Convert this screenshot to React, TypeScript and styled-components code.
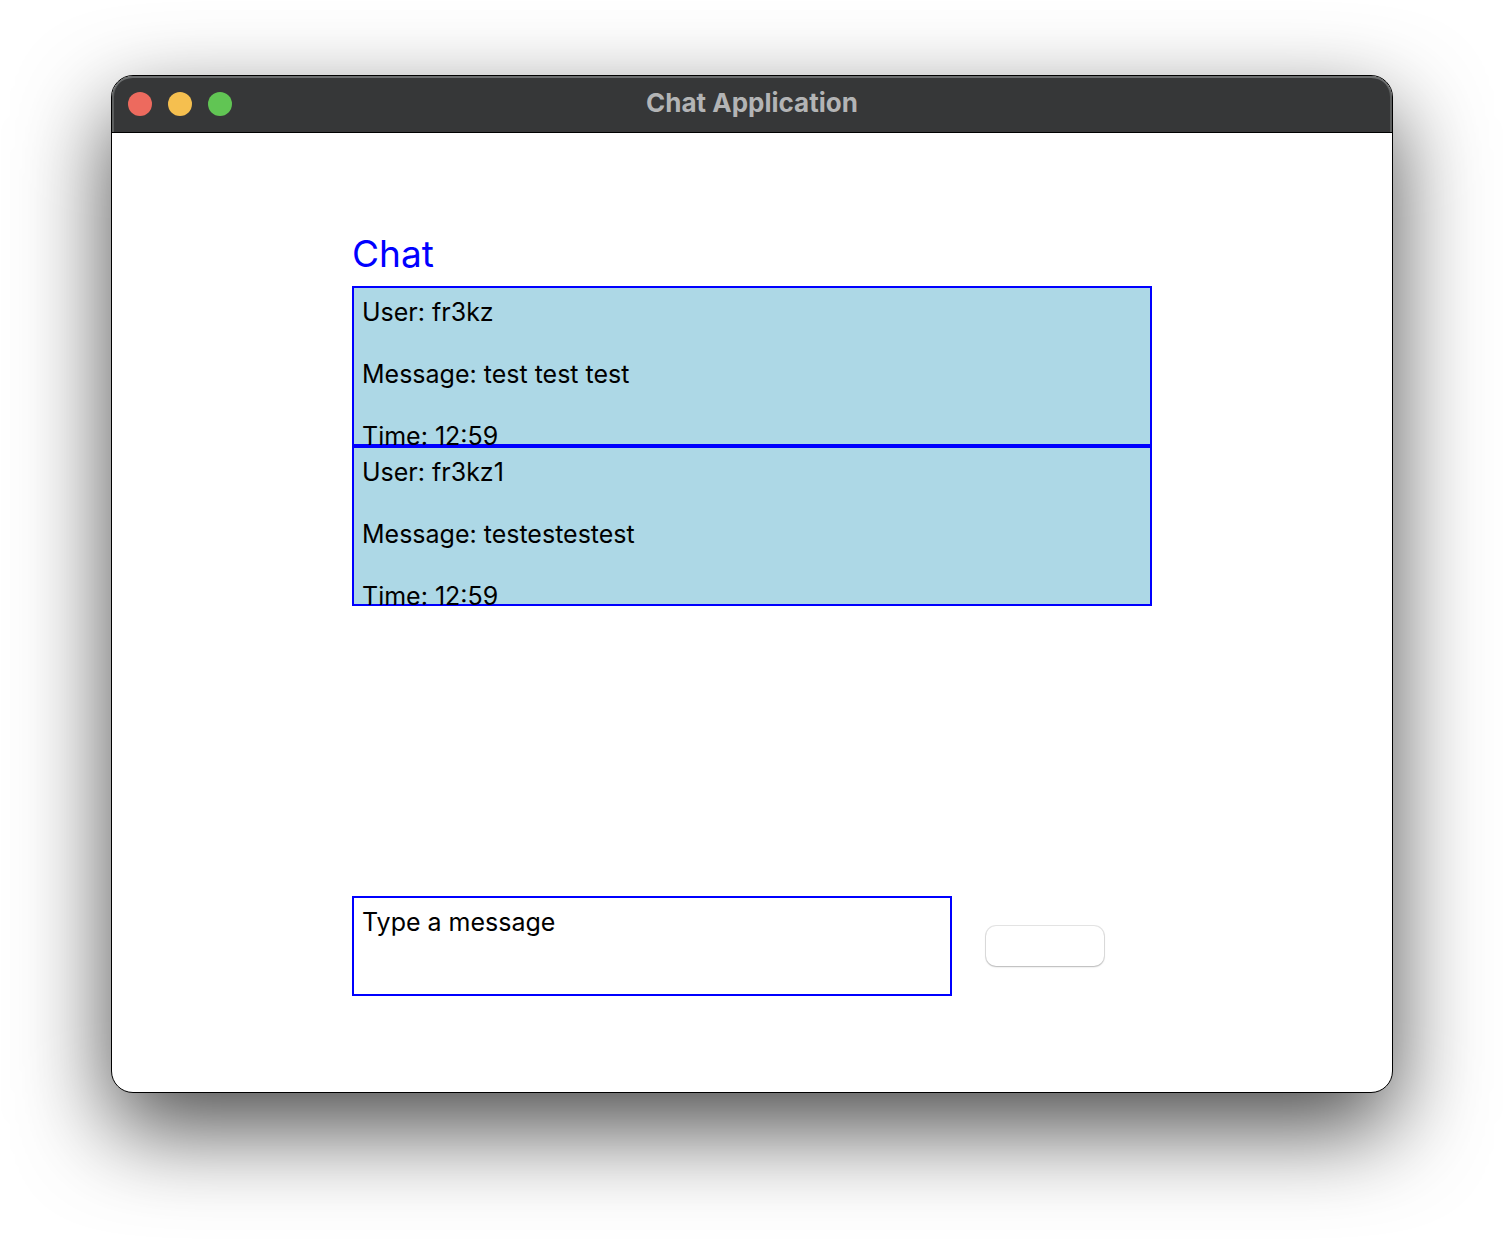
import React, { useState } from "react";
import styled, { createGlobalStyle } from "styled-components";

const GlobalStyle = createGlobalStyle`
  *, *::before, *::after { box-sizing: border-box; }
  body {
    margin: 0;
    background: #fff;
    font-family: Inter, "Liberation Sans", sans-serif;
  }
`;

const Desktop = styled.div`
  display: flex;
  min-height: 100vh;
  padding: 75px 111px 147px;
  overflow: hidden;
`;

const Window = styled.div`
  flex: 1;
  min-width: 0;
  display: flex;
  flex-direction: column;
  border: 1px solid #000;
  border-radius: 22px;
  background: #fff;
  box-shadow: 0 36px 92px rgba(0, 0, 0, 0.7);
  overflow: hidden;
`;

const TitleBar = styled.header`
  display: grid;
  grid-template-columns: 1fr auto 1fr;
  align-items: center;
  height: 57px;
  padding: 0 16px;
  background: #363738;
  border-bottom: 1px solid #000;
  border-radius: 21px 21px 0 0;
  box-shadow: inset 0 2px 0 #6c6e6f, inset 2px 0 0 #5c5e5e, inset -2px 0 0 #5c5e5e;
`;

const Lights = styled.div`
  display: flex;
  gap: 16px;
`;

const Light = styled.button<{ $color: string }>`
  width: 24px;
  height: 24px;
  padding: 0;
  border: 0;
  border-radius: 50%;
  background: ${(p) => p.$color};
`;

const Title = styled.h1`
  margin: 0;
  padding-bottom: 2px;
  font-size: 26px;
  line-height: 32px;
  font-weight: 700;
  color: #b3b4b5;
`;

const Content = styled.main`
  flex: 1;
  display: flex;
  flex-direction: column;
  width: 100%;
  max-width: 800px;
  margin: 0 auto;
  padding: 96px 0;
`;

const Heading = styled.h2`
  margin: 0 0 8px;
  font-size: 37px;
  line-height: 49px;
  font-weight: 400;
  color: #00f;
`;

const MessageList = styled.ul`
  list-style: none;
  margin: 0 0 24px;
  padding: 0;
`;

const MessageCard = styled.li`
  display: flex;
  flex-direction: column;
  gap: 31px;
  height: 160px;
  padding: 9px 8px;
  border: 2px solid #00f;
  background: #add8e6;
`;

const MessageLine = styled.p`
  flex: none;
  margin: 0;
  font-size: 25px;
  line-height: 31px;
  color: #000;
`;

const Composer = styled.form`
  display: flex;
  align-items: center;
  gap: 34px;
  margin-top: auto;
`;

const MessageInput = styled.textarea`
  flex: 0 1 600px;
  min-width: 0;
  height: 100px;
  padding: 9px 8px;
  border: 2px solid #00f;
  border-radius: 0;
  background: #fff;
  color: #000;
  font-family: inherit;
  font-size: 25px;
  line-height: 31px;
  resize: none;
  outline: none;
`;

const SendButton = styled.button`
  width: 118px;
  height: 40px;
  padding: 0;
  border: 0;
  border-radius: 10px;
  background: #fff;
  box-shadow: 0 0 0 1px rgba(0, 0, 0, 0.1), 0 1px 2px rgba(0, 0, 0, 0.2);
`;

const lights = [
  { label: "Close", color: "#ed6a5e" },
  { label: "Minimize", color: "#f5bf4f" },
  { label: "Zoom", color: "#61c554" },
];

const messages = [
  { user: "fr3kz", text: "test test test", time: "12:59" },
  { user: "fr3kz1", text: "testestestest", time: "12:59" },
];

export default function App() {
  const [draft, setDraft] = useState("Type a message");

  return (
    <>
      <GlobalStyle />
      <Desktop>
        <Window>
          <TitleBar>
            <Lights>
              {lights.map((l) => (
                <Light key={l.label} type="button" aria-label={l.label} $color={l.color} />
              ))}
            </Lights>
            <Title>Chat Application</Title>
          </TitleBar>
          <Content>
            <Heading>Chat</Heading>
            <MessageList>
              {messages.map((m) => (
                <MessageCard key={m.user}>
                  <MessageLine>User: {m.user}</MessageLine>
                  <MessageLine>Message: {m.text}</MessageLine>
                  <MessageLine>Time: {m.time}</MessageLine>
                </MessageCard>
              ))}
            </MessageList>
            <Composer onSubmit={(e) => e.preventDefault()}>
              <MessageInput
                aria-label="Message"
                value={draft}
                onChange={(e) => setDraft(e.target.value)}
              />
              <SendButton type="submit" aria-label="Send" />
            </Composer>
          </Content>
        </Window>
      </Desktop>
    </>
  );
}
